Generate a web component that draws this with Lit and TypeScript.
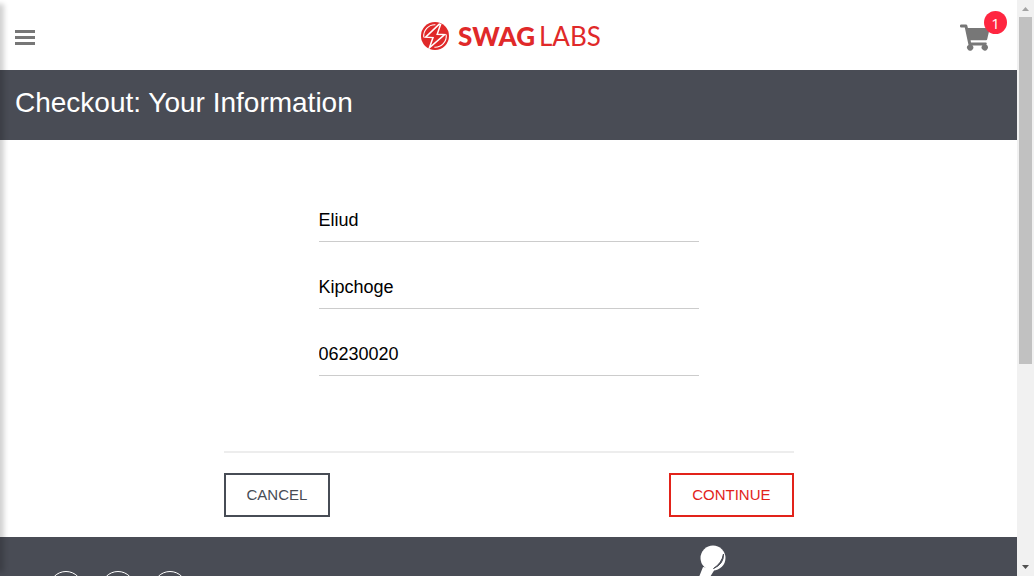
import { LitElement, html, css, svg } from "lit";
import { customElement, property } from "lit/decorators.js";

@customElement("checkout-field")
class CheckoutField extends LitElement {
  @property() label = "";
  @property() name = "";
  @property() value = "";

  static styles = css`
    :host {
      display: block;
    }
    .input {
      display: block;
      box-sizing: border-box;
      width: 100%;
      height: 46px;
      padding: 4px 0 0;
      border: 0;
      border-bottom: 1px solid #cccccc;
      border-radius: 0;
      outline: 0;
      background: transparent;
      color: #000;
      font: 18px "Liberation Sans", Arial, sans-serif;
    }
  `;

  render() {
    return html`<input
      class="input"
      type="text"
      aria-label=${this.label}
      name=${this.name}
      .value=${this.value}
    />`;
  }
}

const boltMark = svg`
  <circle cx="14" cy="14" r="14" fill="#e02929" />
  <g fill="none" stroke="#fff" stroke-width="1.5" stroke-linejoin="miter">
    <path d="M18.8 1.6 L4.6 15.2 L12 15.6 L8.4 25.8 L23.6 12.6 L16.2 12.2 L19.8 1.8" />
    <path d="M2.8 15.4 A11.2 11.2 0 0 1 14.4 2.8" stroke-width="1.1" />
    <path d="M25.2 12.6 A11.2 11.2 0 0 1 13.4 25.2" stroke-width="1.1" />
  </g>
`;

@customElement("app-root")
class AppRoot extends LitElement {
  private fields = [
    { label: "First Name", name: "firstName", value: "Eliud" },
    { label: "Last Name", name: "lastName", value: "Kipchoge" },
    { label: "Zip/Postal Code", name: "postalCode", value: "06230020" },
  ];

  static styles = css`
    :host {
      display: grid;
      grid-template-columns: minmax(0, 1fr) 17px;
      height: 100vh;
      overflow: hidden;
      position: relative;
      background: #fff;
      font-family: "Liberation Sans", Arial, sans-serif;
    }
    .page {
      display: flex;
      flex-direction: column;
      overflow: hidden;
    }
    .header {
      display: grid;
      grid-template-columns: 1fr auto 1fr;
      align-items: center;
      flex: none;
      height: 70px;
      padding: 0 10px 0 15px;
    }
    .menu {
      display: flex;
      flex-direction: column;
      justify-self: start;
      gap: 3px;
      margin-top: 5px;
      padding: 0;
      border: 0;
      background: none;
    }
    .bar {
      width: 20px;
      height: 3px;
      background: #777;
    }
    .brand {
      display: flex;
      align-items: center;
      gap: 9px;
      margin-top: 2px;
      color: #e02929;
      font: 400 26px/28px Lato, sans-serif;
    }
    .brand-name {
      display: flex;
      gap: 4px;
    }
    .brand-strong {
      font-weight: 900;
    }
    .mark {
      display: block;
      width: 28px;
      height: 28px;
    }
    .cart {
      position: relative;
      display: block;
      justify-self: end;
      width: 47px;
      height: 40px;
    }
    .cart-icon {
      display: block;
      margin-top: 9px;
      width: 30px;
      height: 27px;
    }
    .badge {
      position: absolute;
      top: -4px;
      right: 0;
      width: 23px;
      height: 23px;
      border-radius: 50%;
      background: #ff2640;
      color: #fff;
      font: 15px/24px "Open Sans", sans-serif;
      text-align: center;
    }
    .title {
      flex: none;
      box-sizing: border-box;
      height: 70px;
      margin: 0;
      padding: 0 15px;
      background: #494c55;
      color: #fff;
      font-size: 28px;
      font-weight: 400;
      line-height: 65px;
    }
    .form {
      flex: none;
      box-sizing: border-box;
      width: 570px;
      max-width: 100%;
      margin: 0 auto;
      padding: 56px 0 20px;
    }
    .fields {
      display: grid;
      gap: 21px;
      max-width: 380px;
      margin: 0 auto 75px;
    }
    .actions {
      display: flex;
      justify-content: space-between;
      padding-top: 20px;
      border-top: 2px solid #ededed;
    }
    .button {
      height: 44px;
      padding: 0 21px 2px;
      border: 2px solid currentColor;
      background: #fff;
      font: 15px "Liberation Sans", Arial, sans-serif;
    }
    .cancel {
      color: #474c55;
    }
    .continue {
      color: #e2231a;
    }
    .footer {
      display: flex;
      flex: 1 0 auto;
      justify-content: space-between;
      height: 39px;
      background: #494c55;
      overflow: hidden;
    }
    .social {
      display: flex;
      gap: 18px;
      margin: 0;
      padding: 34px 0 0 49px;
    }
    .social-link {
      display: block;
      box-sizing: border-box;
      width: 34px;
      height: 34px;
      border: 1px solid #fff;
      border-radius: 50%;
    }
    .robot {
      width: 40px;
      height: 39px;
      margin-right: 282px;
    }
    .scrollbar {
      display: flex;
      flex-direction: column;
      align-items: center;
      justify-content: space-between;
      background: #f1f1f1;
    }
    .arrow {
      flex: none;
      width: 17px;
      height: 17px;
    }
    .track {
      flex: 1;
      width: 13px;
    }
    .thumb {
      height: 64%;
      background: #c1c1c1;
    }
    .drawer {
      position: absolute;
      top: 4px;
      bottom: 4px;
      right: 100%;
      width: 300px;
      box-shadow: 4px 0 5px rgba(0, 0, 0, 0.18);
    }
  `;

  render() {
    return html`
      <div class="page">
        <header class="header">
          <button class="menu" aria-label="Open menu">
            <span class="bar"></span><span class="bar"></span><span class="bar"></span>
          </button>
          <div class="brand">
            <svg class="mark" viewBox="0 0 28 28" aria-hidden="true">${boltMark}</svg>
            <span class="brand-name"><span class="brand-strong">SWAG</span><span>LABS</span></span>
          </div>
          <a class="cart" href="#cart" aria-label="Cart">
            <svg class="cart-icon" viewBox="0 0 30 27" fill="#777" aria-hidden="true">
              <path d="M1.2 0.5 H6 Q7 0.5 7.3 1.5 L7.9 4 H28.5 Q29.8 4 29.5 5.3 L27.2 15.3 Q27 16.2 26 16.2 H10.6 L11 18.4 H25.8 Q27 18.6 26.7 19.7 L26.4 20.8 A3.1 3.1 0 1 1 22.4 21.4 H12.4 A3.1 3.1 0 1 1 8.5 20.9 L4.8 3.5 H1.2 Q0 3.5 0 2.4 V1.6 Q0 0.5 1.2 0.5 Z" />
            </svg>
            <span class="badge">1</span>
          </a>
        </header>
        <h1 class="title">Checkout: Your Information</h1>
        <form class="form" @submit=${(e: Event) => e.preventDefault()}>
          <div class="fields">
            ${this.fields.map(
              (f) => html`<checkout-field .label=${f.label} .name=${f.name} .value=${f.value}></checkout-field>`
            )}
          </div>
          <div class="actions">
            <button type="button" class="button cancel">CANCEL</button>
            <button type="submit" class="button continue">CONTINUE</button>
          </div>
        </form>
        <footer class="footer">
          <nav class="social">
            <a class="social-link" href="#twitter" aria-label="Twitter"></a>
            <a class="social-link" href="#facebook" aria-label="Facebook"></a>
            <a class="social-link" href="#linkedin" aria-label="LinkedIn"></a>
          </nav>
          <svg class="robot" viewBox="0 0 40 39" aria-hidden="true">
            <circle cx="18" cy="21" r="12.5" fill="#fff" />
            <path d="M8 30 L4 40 H15 L20 32 Z" fill="#fff" />
            <path d="M28.5 17 Q29 27 18.5 31.5 Q27 26 28.5 17 Z" fill="#494c55" stroke="#494c55" stroke-width="1" />
          </svg>
        </footer>
      </div>
      <div class="scrollbar" aria-hidden="true">
        <svg class="arrow" viewBox="0 0 17 17"><path d="M5 11 L8.5 7 L12 11 Z" fill="#a3a3a3" /></svg>
        <div class="track"><div class="thumb"></div></div>
        <svg class="arrow" viewBox="0 0 17 17"><path d="M5 6 L8.5 10 L12 6 Z" fill="#505050" /></svg>
      </div>
      <div class="drawer"></div>
    `;
  }
}
